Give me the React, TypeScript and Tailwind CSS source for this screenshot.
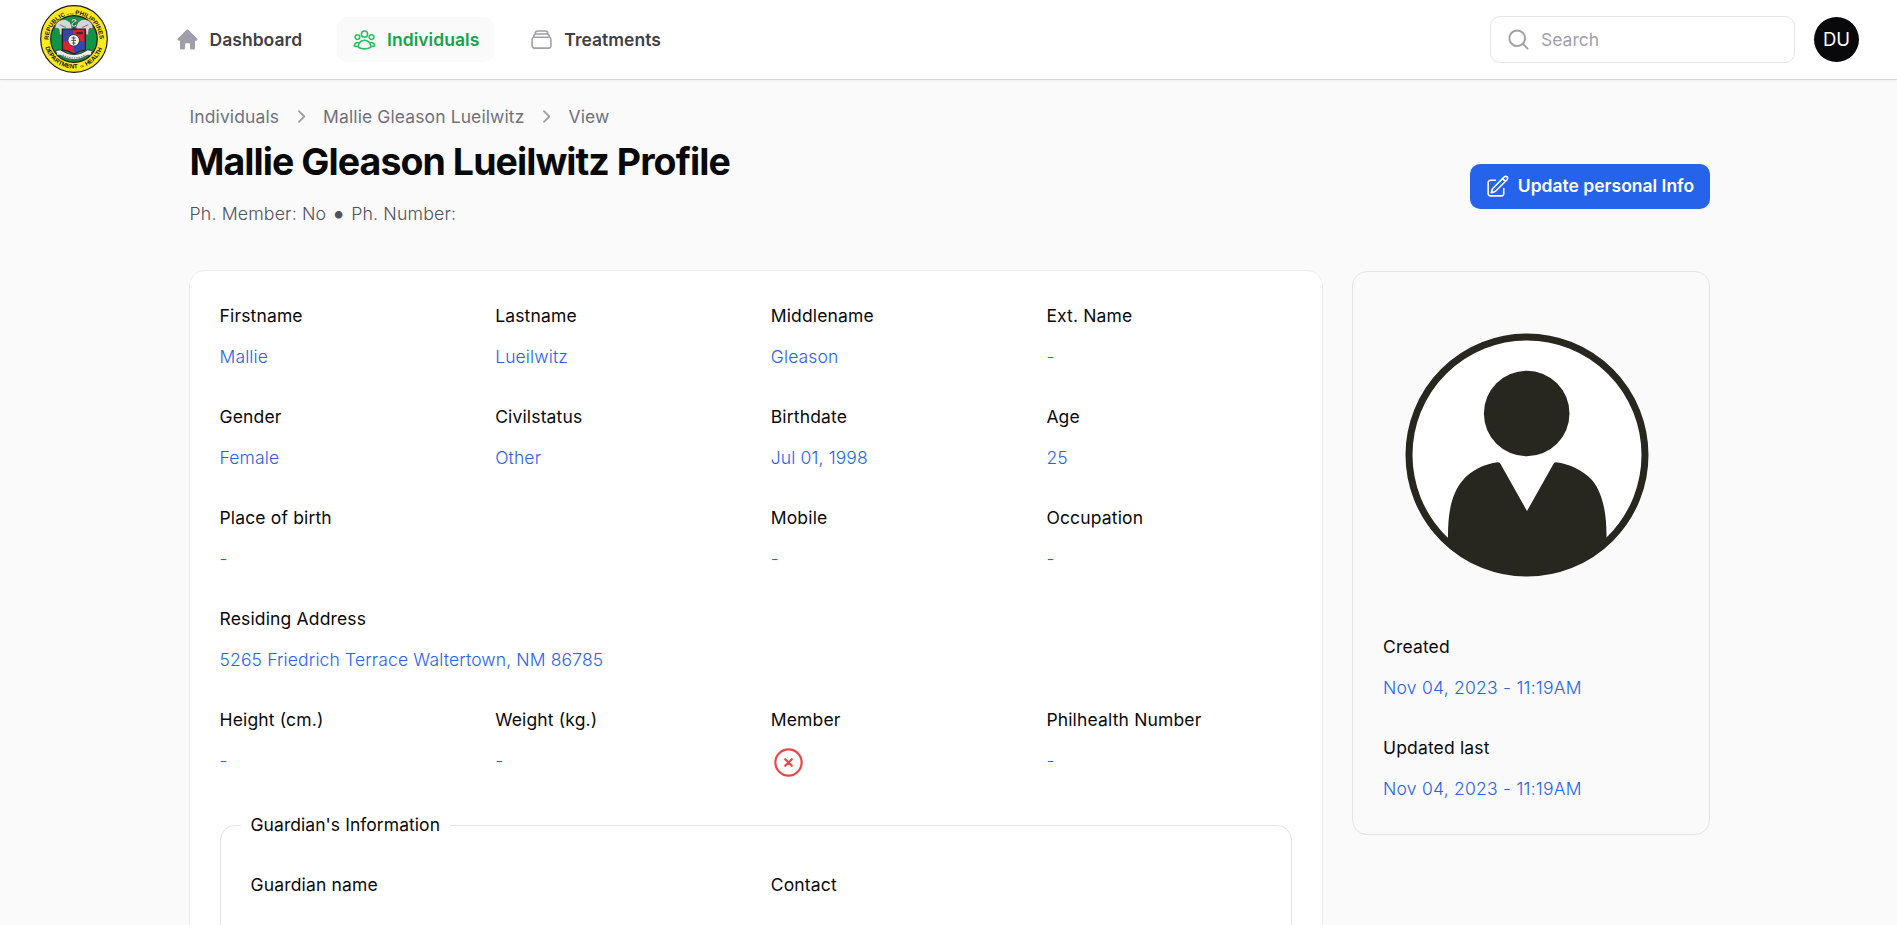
import React from "react";
import {
  HiMiniHome,
  HiMiniMagnifyingGlass,
  HiMiniChevronRight,
  HiOutlineUserGroup,
  HiOutlineRectangleStack,
  HiOutlinePencilSquare,
  HiOutlineXCircle,
} from "react-icons/hi2";

function Seal() {
  return (
    <svg viewBox="0 0 200 200" className="-mt-0.5 size-[68px] shrink-0" aria-label="Department of Health">
      <defs>
        <path id="ring-top" d="M 25 103 A 75 75 0 1 1 175 103" />
        <path id="ring-bottom" d="M 15.500 122 A 87.500 87.500 0 0 0 184.500 122" />
      </defs>
      <circle cx="100" cy="100" r="98" fill="#fbe920" stroke="#1c1c10" strokeWidth="3.5" />
      <circle cx="100" cy="100" r="68.500" fill="#0f9448" stroke="#1c1c10" strokeWidth="3.5" />
      <g fontFamily="Liberation Sans, Arial, sans-serif" fontWeight="700" fill="#111" fontSize="18">
        <text>
          <textPath href="#ring-top" startOffset="0">REPUBLIC</textPath>
        </text>
        <text fontSize="5.500">
          <textPath href="#ring-top" startOffset="96">OF THE</textPath>
        </text>
        <text>
          <textPath href="#ring-top" startOffset="121">PHILIPPINES</textPath>
        </text>
        <text>
          <textPath href="#ring-bottom" startOffset="2">DEPARTMENT</textPath>
        </text>
        <text fontSize="8">
          <textPath href="#ring-bottom" startOffset="134">OF</textPath>
        </text>
        <text>
          <textPath href="#ring-bottom" startOffset="151">HEALTH</textPath>
        </text>
      </g>
      <path
        d="M94 70 C94 50 78 38 62 44 C50 48 44 58 44 70 C50 68 54 68 56 72 L58 88 L64 88 L66 74 L94 74 Z"
        fill="#d3d8d5"
        stroke="#4f5d55"
        strokeWidth="2"
      />
      <path
        d="M106 70 C106 50 122 38 138 44 C150 48 156 58 156 70 C150 68 146 68 144 72 L142 88 L136 88 L134 74 L106 74 Z"
        fill="#d3d8d5"
        stroke="#4f5d55"
        strokeWidth="2"
      />
      <path d="M58 58 L76 66 M142 58 L124 66" stroke="#7d8983" strokeWidth="3" />
      <path d="M100 38 V72" stroke="#3d3d3d" strokeWidth="4" />
      <path d="M94 46 q6 -6 12 0 q-12 8 -12 13 q6 6 12 0" stroke="#d8d8d8" strokeWidth="3" fill="none" />
      <path d="M66 71 H133 V132 Q116 134 100 144 Q84 134 66 132 Z" fill="#dc2434" stroke="#201a2a" strokeWidth="4" />
      <path d="M68 73 H99 V106 H68 Z" fill="#3a44a4" />
      <path d="M100 106 H131 V130 Q114 133 100 142 Z" fill="#2f49b4" />
      <path d="M107 79 H126 V86 H107 Z" fill="#5a1820" />
      <circle cx="99" cy="104" r="17" fill="#f5f5f5" stroke="#222" strokeWidth="2.5" />
      <path d="M99 92 V118 M93 97 H105 M92 104 H106 M95 112 H105" stroke="#333" strokeWidth="2.5" />
      <path
        d="M46 134 L60 132 Q100 160 140 132 L154 134 L150 148 L140 148 Q100 174 60 148 L50 148 Z"
        fill="#eeeeee"
        stroke="#333"
        strokeWidth="2.5"
      />
      <path d="M66 147 Q100 164 134 147" stroke="#777" strokeWidth="3" strokeDasharray="4 3" fill="none" />
    </svg>
  );
}

function NavItem({
  icon: Icon,
  label,
  active = false,
}: {
  icon: React.ComponentType<{ className?: string }>;
  label: string;
  active?: boolean;
}) {
  return (
    <a
      className={
        active
          ? "flex h-[45px] items-center gap-2.5 rounded-[10px] bg-zinc-50 px-[15px] text-[#16a34a]"
          : "flex h-[45px] items-center gap-2.5 rounded-[10px] px-[15px] text-zinc-700"
      }
    >
      <Icon className={active ? "size-[25px] text-[#22c55e]" : "size-[25px] text-zinc-400"} />
      <span className="text-[17.5px] font-semibold leading-[25px] tracking-[0.002em]">{label}</span>
    </a>
  );
}

function Entry({
  label,
  children,
  className = "",
}: {
  label: string;
  children?: React.ReactNode;
  className?: string;
}) {
  return (
    <div className={className}>
      <div className="text-[17.5px] font-normal leading-[30px] tracking-[0.009em] text-zinc-950">{label}</div>
      <div className="mt-[11px] h-[30px] text-[17.5px] font-light leading-[30px] tracking-[0.008em] text-[#2563eb]">
        {children}
      </div>
    </div>
  );
}

function Portrait() {
  return (
    <svg viewBox="0 0 244 244" className="size-[244px]">
      <defs>
        <clipPath id="portrait-clip">
          <circle cx="122" cy="122" r="120" />
        </clipPath>
      </defs>
      <circle cx="122" cy="122" r="118" fill="#fff" stroke="#27261f" strokeWidth="7" />
      <circle cx="121.7" cy="80.5" r="42.8" fill="#27261f" />
      <path
        clipPath="url(#portrait-clip)"
        fill="#27261f"
        d="M43 250 V202 C43 178 47 160 58 147 C66 137.500 79 131 93 129.300 L95 130 L122 178 L149 130 L151 129.300 C165 131 178 137.500 187 147 C197 159 201.500 178 201.500 202 V250 Z"
      />
    </svg>
  );
}

export default function App() {
  return (
    <div className="h-screen overflow-hidden bg-zinc-50 font-['Inter',sans-serif] text-zinc-950">
      <header className="flex h-[79px] items-center bg-white pl-[40px] pr-[38px] shadow-[0_1px_0_0_rgba(9,9,11,0.1),0_2px_3px_0_rgba(9,9,11,0.05)]">
        <Seal />
        <nav className="ml-[51.500px] flex items-center gap-5">
          <NavItem icon={HiMiniHome} label="Dashboard" />
          <NavItem icon={HiOutlineUserGroup} label="Individuals" active />
          <NavItem icon={HiOutlineRectangleStack} label="Treatments" />
        </nav>
        <div className="ml-auto flex items-center gap-[19px]">
          <div className="flex h-[47px] w-[305px] items-center gap-2.5 rounded-[10px] border border-zinc-200 bg-white pl-[15px]">
            <HiMiniMagnifyingGlass className="size-[25px] text-zinc-400" />
            <span className="text-[17.5px] leading-[25px] text-zinc-400">Search</span>
          </div>
          <div className="flex size-[45px] items-center justify-center rounded-full bg-zinc-950 text-[18.500px] text-white">
            DU
          </div>
        </div>
      </header>

      <main className="ml-[189.500px] w-[1520px] pt-[25px]">
        <div className="flex items-center justify-between">
          <div>
            <div className="flex items-center gap-[9px] text-[17.5px] font-normal leading-[25px] tracking-[0.006em] text-zinc-500">
              <span>Individuals</span>
              <HiMiniChevronRight className="mr-px size-[25px] text-zinc-400" />
              <span>Mallie Gleason Lueilwitz</span>
              <HiMiniChevronRight className="mr-px size-[25px] text-zinc-400" />
              <span>View</span>
            </div>
            <h1 className="mt-2.5 text-[37.5px] font-bold leading-[45px] tracking-tight">
              Mallie Gleason Lueilwitz Profile
            </h1>
            <p className="mt-[17px] flex h-[25px] items-center text-[17.75px] font-light leading-[25px] tracking-[0.008em] text-zinc-600">
              <span>Ph. Member: No</span>
              <span className="w-[25px] text-center text-[28px]">•</span>
              <span>Ph. Number:</span>
            </p>
          </div>
          <button className="mt-[42px] flex h-[45px] w-60 items-center justify-center gap-2 rounded-[10px] bg-[#2563eb] text-[17.5px] font-semibold text-white">
            <HiOutlinePencilSquare className="size-[25px]" />
            Update personal Info
          </button>
        </div>

        <div className="mt-[45px] flex items-start gap-[30px]">
          <section className="h-[800px] w-[1132.500px] rounded-[15px] bg-white p-[30px] ring-1 ring-zinc-950/5">
            <div className="grid grid-cols-4 gap-[30px]">
              <Entry label="Firstname">Mallie</Entry>
              <Entry label="Lastname">Lueilwitz</Entry>
              <Entry label="Middlename">Gleason</Entry>
              <Entry label="Ext. Name">-</Entry>
              <Entry label="Gender">Female</Entry>
              <Entry label="Civilstatus">Other</Entry>
              <Entry label="Birthdate">Jul 01, 1998</Entry>
              <Entry label="Age">25</Entry>
              <Entry label="Place of birth" className="col-span-2">-</Entry>
              <Entry label="Mobile">-</Entry>
              <Entry label="Occupation">-</Entry>
              <Entry label="Residing Address" className="col-span-4">
                5265 Friedrich Terrace Waltertown, NM 86785
              </Entry>
              <Entry label="Height (cm.)">-</Entry>
              <Entry label="Weight (kg.)">-</Entry>
              <Entry label="Member">
                <HiOutlineXCircle className="-mt-px size-[35px] text-[#ef4444]" />
              </Entry>
              <Entry label="Philhealth Number">-</Entry>
            </div>
            <fieldset className="mt-[34px] h-[300px] rounded-[15px] border border-zinc-200 px-[30px] pt-[30px]">
              <legend className="-ml-2.5 px-2.5 text-[17.5px] font-normal leading-[30px] tracking-[0.003em]">
                Guardian's Information
              </legend>
              <div className="grid grid-cols-2 gap-[30px]">
                <Entry label="Guardian name" />
                <Entry label="Contact" />
              </div>
            </fieldset>
          </section>

          <aside className="h-[564px] w-[357.500px] rounded-[15px] border border-zinc-200 px-[30px] pt-[61px]">
            <div className="flex justify-center pr-[7px]">
              <Portrait />
            </div>
            <div className="mt-[55px] flex flex-col gap-[30px]">
              <Entry label="Created">
                <span className="tracking-[0.014em]">Nov 04, 2023 - 11:19AM</span>
              </Entry>
              <Entry label="Updated last">
                <span className="tracking-[0.014em]">Nov 04, 2023 - 11:19AM</span>
              </Entry>
            </div>
          </aside>
        </div>
      </main>
    </div>
  );
}
